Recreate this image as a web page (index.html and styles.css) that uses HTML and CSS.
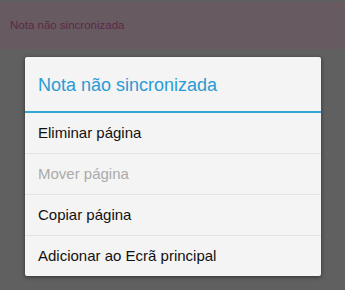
FILE: index.html
```html
<!DOCTYPE html>
<html lang="pt">
<head>
    <meta charset="UTF-8">
    <title>Nota não sincronizada</title>
    <link rel="stylesheet" href="styles.css">
</head>
<body>
<div id="screen">
    <div id="banner">Nota não sincronizada</div>
    <div id="dialog">
        <div class="title">Nota não sincronizada</div>
        <ul id="menu">
            <li>Eliminar página</li>
            <li class="disabled">Mover página</li>
            <li>Copiar página</li>
            <li>Adicionar ao Ecrã principal</li>
        </ul>
    </div>
</div>
</body>
</html>
```

FILE: styles.css
```css
html, body, ul {
    margin: 0;
    padding: 0;
}
li {
    list-style: none;
}
body {
    background: #606060;
    font-family: "Liberation Sans", Arial, sans-serif;
}
#screen {
    width: 345px;
    height: 290px;
    overflow: hidden;
    display: flex;
    flex-direction: column;
    align-items: center;
}
#banner {
    align-self: stretch;
    box-sizing: border-box;
    height: 47px;
    margin-top: 2px;
    padding: 17px 0 0 10px;
    background: #675a60;
    color: #5b2a48;
    font-size: 11.5px;
}
#dialog {
    width: 296px;
    margin-top: 8px;
    margin-left: 1px;
    background: #f4f4f4;
    border-radius: 2px;
    box-shadow: 0 1px 4px rgba(0, 0, 0, 0.5);
}
#dialog .title {
    height: 54px;
    line-height: 57px;
    padding-left: 13px;
    color: #2a9bd4;
    font-size: 18px;
    border-bottom: 2px solid #33a6d3;
}
#menu li {
    height: 40px;
    line-height: 40px;
    padding-left: 13px;
    font-size: 15px;
    color: #111;
    border-top: 1px solid #e3e3e3;
}
#menu li:first-child {
    border-top: none;
}
#menu li.disabled {
    color: #aaa;
}
```
